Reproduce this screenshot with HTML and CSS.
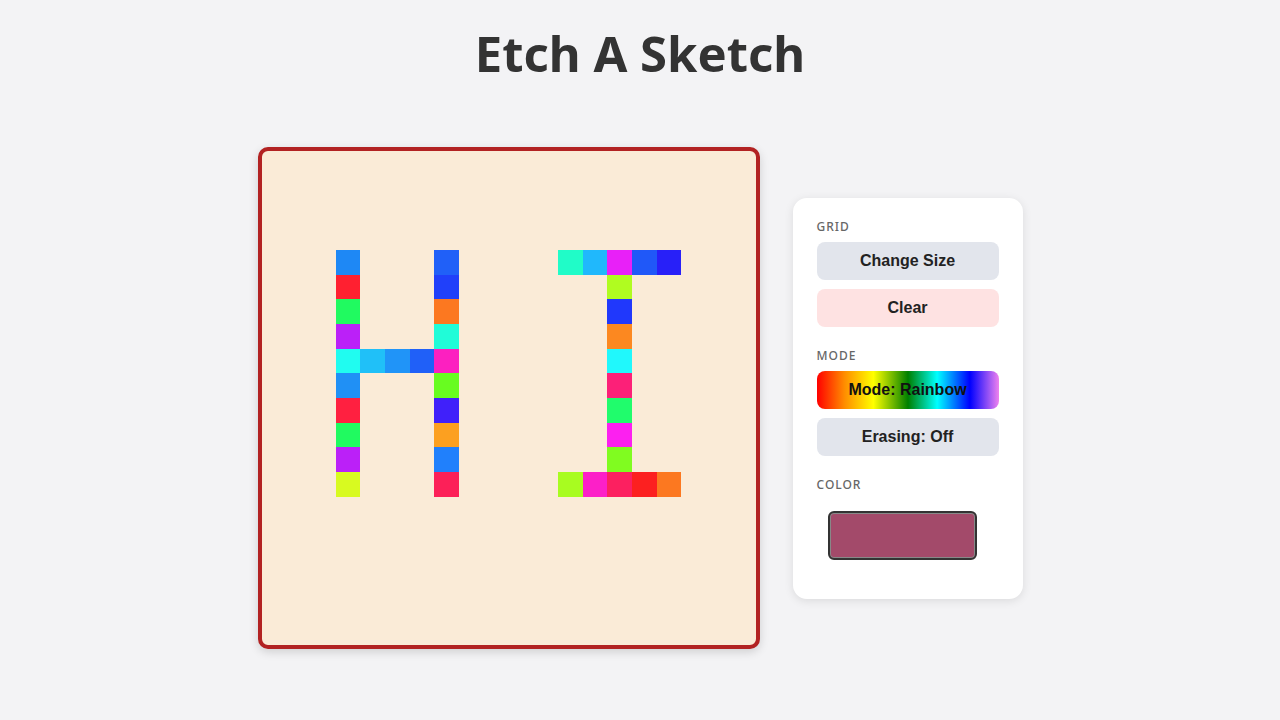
FILE: index.html
```html
<!DOCTYPE html>
<html lang="en">
<head>
<meta charset="utf-8">
<title>Etch A Sketch</title>
<link rel="stylesheet" href="styles.css">
</head>
<body>
<h1 class="title">Etch A Sketch</h1>
<main class="layout">
  <div class="board" id="board"></div>
  <aside class="panel">
    <section class="group">
      <div class="label">GRID</div>
      <button class="btn btn-gray">Change Size</button>
      <button class="btn btn-red">Clear</button>
    </section>
    <section class="group">
      <div class="label">MODE</div>
      <button class="btn btn-rainbow">Mode: Rainbow</button>
      <button class="btn btn-gray">Erasing: Off</button>
    </section>
    <section class="group">
      <div class="label">COLOR</div>
      <div class="swatch"></div>
    </section>
  </aside>
</main>
<script src="script.js"></script>
</body>
</html>
```
FILE: styles.css
```css
* { box-sizing: border-box; }
html, body { margin: 0; padding: 0; }
body {
  background: #f3f3f5;
  font-family: "Noto Sans", "Open Sans", sans-serif;
  color: #333;
  width: 1280px;
  height: 720px;
  overflow: hidden;
}
.title {
  margin: 23px 0 0;
  text-align: center;
  font-size: 49px;
  line-height: 60px;
  font-weight: 700;
  color: #333;
}
.layout {
  margin-top: 64px;
  display: flex;
  justify-content: center;
  align-items: center;
  gap: 33px;
}
.board {
  width: 502px;
  height: 502px;
  border: 4px solid #b22222;
  border-radius: 10px;
  background: #faebd7;
  display: grid;
  grid-template-columns: repeat(20, 1fr);
  grid-template-rows: repeat(20, 1fr);
  overflow: hidden;
  box-shadow: 0 3px 10px rgba(0,0,0,0.15);
}
.cell { width: 100%; height: 100%; }
.panel {
  width: 230px;
  background: #fff;
  border-radius: 14px;
  padding: 21px 24px 39px;
  box-shadow: 0 2px 10px rgba(0,0,0,0.10);
  display: flex;
  flex-direction: column;
  gap: 21px;
}
.group { display: flex; flex-direction: column; gap: 9px; }
.label {
  font-size: 12px;
  line-height: 16px;
  font-weight: 500;
  letter-spacing: 1px;
  color: #666;
  margin-bottom: -2px;
}
.btn {
  display: block;
  width: 182px;
  height: 38px;
  border: none;
  border-radius: 8px;
  font-family: "Liberation Sans", Arial, sans-serif;
  font-size: 16px;
  font-weight: 700;
  color: #222;
  padding: 0;
}
.btn-gray { background: #e2e5ec; }
.btn-red { background: #fee2e2; }
.btn-rainbow {
  background: linear-gradient(to right, #ff0000, #ff8c00 15%, #ffff00 31%, #008000 50%, #00ffff 66%, #0000ff 84%, #ee82ee 100%);
  color: #111;
}
.swatch {
  margin: 11px 0 0 11px;
  width: 149px;
  height: 49px;
  border: 2px solid #333;
  border-radius: 6px;
  background: #a34a6a;
  box-shadow: inset 0 0 0 1px #888;
}
```
FILE: script.js
```js
const colors = {
  "4,3":"#1e88f5","5,3":"#ff2030","6,3":"#20fa60","7,3":"#bb20f8","8,3":"#20fcf0",
  "9,3":"#2090f5","10,3":"#ff2040","11,3":"#20fa60","12,3":"#bb20f8","13,3":"#d8fa20",
  "8,4":"#20c0f8","8,5":"#2094f8","8,6":"#2060f8",
  "4,7":"#2060f8","5,7":"#2040fa","6,7":"#fc7820","7,7":"#20fcd8","8,7":"#fc20c0",
  "9,7":"#68fc20","10,7":"#4020fa","11,7":"#fca020","12,7":"#2080fc","13,7":"#fc2058",
  "4,12":"#20fcc8","4,13":"#20b8fc","4,14":"#e820f8","4,15":"#2058f8","4,16":"#2820f8",
  "5,14":"#b0fc20","6,14":"#2038fc","7,14":"#fc8820","8,14":"#20f8fc","9,14":"#fc2078",
  "10,14":"#20fc6c","11,14":"#fc20f0","12,14":"#80fc20",
  "13,12":"#a8fc20","13,13":"#fc20c8","13,14":"#fc2060","13,15":"#fc2020","13,16":"#fc7820"
};
const board = document.getElementById("board");
for (let r = 0; r < 20; r++) {
  for (let c = 0; c < 20; c++) {
    const d = document.createElement("div");
    d.className = "cell";
    const col = colors[r + "," + c];
    if (col) d.style.backgroundColor = col;
    board.appendChild(d);
  }
}
```
